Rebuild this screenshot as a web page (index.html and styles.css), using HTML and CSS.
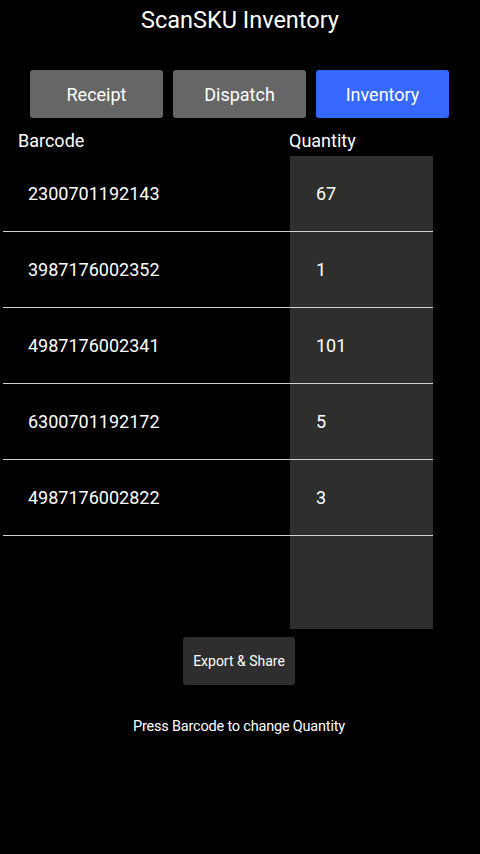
FILE: index.html
```html
<!DOCTYPE html>
<html>
<head>
  <title>ScanSKU Inventory</title>
  <link rel="stylesheet" href="styles.css">
</head>
<body>
  <h1 class="title">ScanSKU Inventory</h1>

  <div class="tabs">
    <button type="button" class="tab">Receipt</button>
    <button type="button" class="tab">Dispatch</button>
    <button type="button" class="tab active">Inventory</button>
  </div>

  <div class="head">
    <span class="head-barcode">Barcode</span>
    <span class="head-qty">Quantity</span>
  </div>

  <div class="table">
    <div class="row"><span class="code">2300701192143</span><span class="qty">67</span></div>
    <div class="row"><span class="code">3987176002352</span><span class="qty">1</span></div>
    <div class="row"><span class="code">4987176002341</span><span class="qty">101</span></div>
    <div class="row"><span class="code">6300701192172</span><span class="qty">5</span></div>
    <div class="row"><span class="code">4987176002822</span><span class="qty">3</span></div>
  </div>

  <div class="actions">
    <button type="button" class="export">Export &amp; Share</button>
  </div>

  <p class="hint">Press Barcode to change Quantity</p>
</body>
</html>
```

FILE: styles.css
```css
body {
  margin: 0;
  background: #000;
  color: #fff;
  font-family: Roboto, "Noto Sans", sans-serif;
}

.title {
  margin: 0;
  padding-top: 6px;
  height: 70px;
  box-sizing: border-box;
  font-size: 23.5px;
  font-weight: normal;
  text-align: center;
  line-height: 28px;
}

.tabs {
  display: flex;
  gap: 10px;
  padding-left: 30px;
}

.tab {
  width: 133px;
  height: 48px;
  border: none;
  border-radius: 3px;
  background: #666;
  color: #fff;
  font-family: inherit;
  font-size: 18px;
  padding: 0;
}

.tab.active {
  background: #3668ff;
}

.head {
  display: flex;
  height: 38px;
  font-size: 18px;
  line-height: 24px;
  padding-top: 11px;
  box-sizing: border-box;
}

.head-barcode {
  width: 271px;
  padding-left: 18px;
}

.table {
  margin-left: 3px;
  width: 430px;
  height: 473px;
  background: linear-gradient(to right, transparent 287px, #2e2e2c 287px);
}

.row {
  display: grid;
  grid-template-columns: 287px 143px;
  height: 76px;
  box-sizing: border-box;
  border-bottom: 1px solid #d0d0d0;
  font-size: 18px;
  align-items: center;
}

.code {
  padding-left: 25px;
}

.qty {
  padding-left: 26px;
}

.actions {
  display: flex;
  justify-content: center;
  padding-top: 8px;
  padding-right: 2px;
}

.export {
  width: 112px;
  height: 48px;
  border: none;
  border-radius: 3px;
  background: #2e2e2e;
  color: #fff;
  font-family: inherit;
  font-size: 14px;
  padding: 0 0 1px;
  line-height: 16px;
}

.hint {
  margin: 0;
  padding-top: 33px;
  padding-right: 2px;
  font-size: 14.5px;
  text-align: center;
  letter-spacing: -0.2px;
}
```
